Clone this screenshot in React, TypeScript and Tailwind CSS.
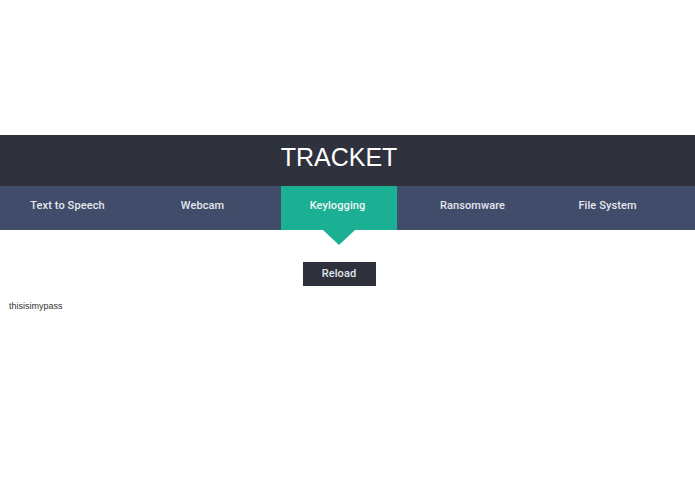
const tabs = ['Text to Speech', 'Webcam', 'Keylogging', 'Ransomware', 'File System'];

export default function App() {
  const active = 'Keylogging';

  return (
    <div className="min-h-screen bg-white font-['Liberation_Sans',Arial,sans-serif]">
      <div className="h-[135px]" />

      {/* header */}
      <header className="h-[51px] bg-[#2f323d]">
        <h1 className="w-[678px] pt-[8px] text-center text-[25px] leading-[29px] text-white">TRACKET</h1>
      </header>

      {/* tabs */}
      <nav className="h-[44px] bg-[#414c6a] font-['Roboto',Arial,sans-serif]">
        <ul className="flex h-full">
          {tabs.map((tab) => (
            <li key={tab} className="flex h-full w-[135px] justify-center">
              {tab === active ? (
                <div className="relative ml-[3px] flex h-full w-[116px] items-center justify-center bg-[#1baf94] pr-[3px] pb-[3px] text-[11px] font-medium tracking-[0.1px] text-[#f2f4f6]">
                  {tab}
                  <span className="absolute top-full left-1/2 -ml-[16px] h-0 w-0 border-x-[16px] border-t-[15px] border-x-transparent border-t-[#1baf94]" />
                </div>
              ) : (
                <div className="flex h-full items-center pb-[3px] text-[11px] font-medium tracking-[0.1px] text-[#e4e7ee]">{tab}</div>
              )}
            </li>
          ))}
        </ul>
      </nav>

      <main className="w-[678px]">
        <div className="flex justify-center pt-[32px]">
          <button className="h-[24px] w-[73px] bg-[#2e313c] font-['Roboto',Arial,sans-serif] text-[11px] font-medium tracking-[0.1px] text-[#e2e5ec]">Reload</button>
        </div>
        <p className="mt-[15px] pl-[9px] text-[9px] leading-[10px] text-[#333]">thisisimypass</p>
      </main>
    </div>
  );
}
